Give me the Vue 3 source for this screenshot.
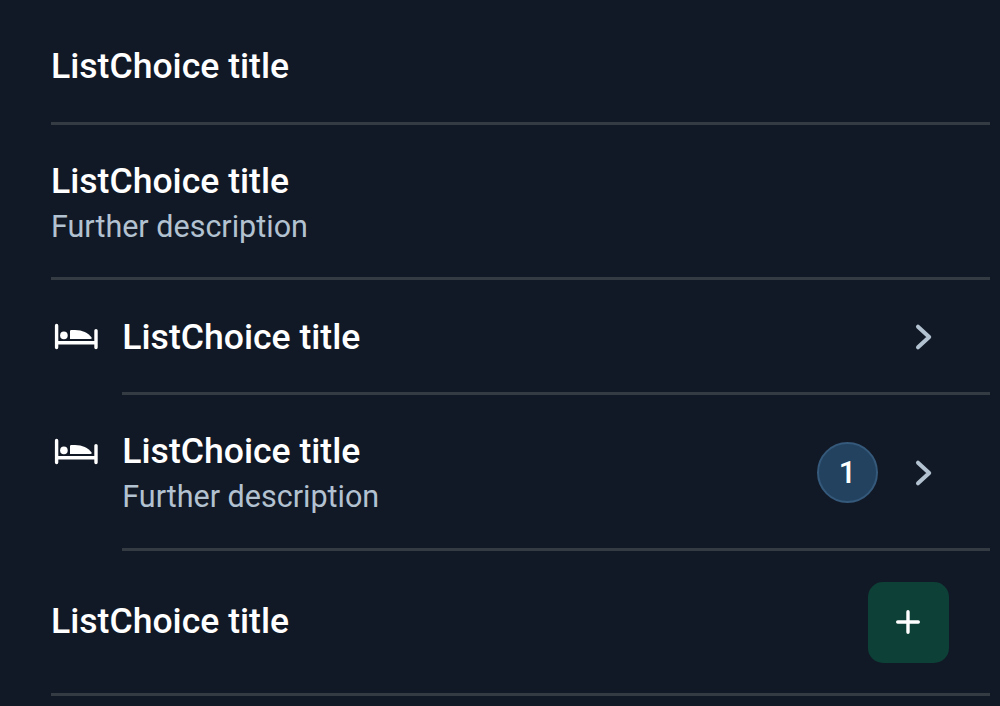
<script setup>
const rows = [
  {},
  { description: true },
  { icon: true, arrow: true },
  { icon: true, description: true, badge: 1, arrow: true },
  { add: true },
]
</script>

<template>
  <main class="list">
    <section v-for="(row, i) in rows" :key="i" class="row" :class="{ tall: row.description, action: row.add }">
      <div v-if="row.icon" class="lead">
        <svg class="bed" width="46" height="30" viewBox="0 0 46 30">
          <path d="M3.6 3.4V25.5M43 8.6V25.5M3.6 20.8H43" fill="none" stroke="currentColor" stroke-width="3.4" stroke-linecap="round" />
          <circle cx="10.9" cy="13.4" r="3.8" fill="currentColor" />
          <path d="M17 9.3Q17 8 18.4 8H22C29.5 8 35 11.1 38.4 15.2C39.2 16.3 38.6 16.9 37.4 16.9H17Z" fill="currentColor" />
        </svg>
      </div>
      <div class="body">
        <div class="copy">
          <div class="title">ListChoice title</div>
          <div v-if="row.description" class="description">Further description</div>
        </div>
        <div v-if="row.badge" class="badge">{{ row.badge }}</div>
        <svg v-if="row.arrow" class="arrow" width="20" height="28" viewBox="0 0 20 28">
          <path d="M4 3.7L15.2 14L4 24.3" fill="none" stroke="currentColor" stroke-width="4" stroke-linecap="round" stroke-linejoin="round" />
        </svg>
        <button v-if="row.add" class="add" aria-label="Add">
          <svg width="26" height="26" viewBox="0 0 26 26">
            <path d="M13 2.7V23.3M2.7 13H23.3" stroke="currentColor" stroke-width="3.4" stroke-linecap="round" />
          </svg>
        </button>
      </div>
    </section>
  </main>
</template>

<style>
body { background: #121926; }
</style>

<style scoped>
.list {
  box-sizing: border-box;
  height: 706px;
  padding: 10px 10px 0 51px;
  overflow: hidden;
  background: #121926;
  font-family: Roboto, sans-serif;
}
.row { display: flex; height: 115px; }
.tall { height: 155.4px; }
.action { height: 145px; }
.lead { flex: none; width: 71.3px; padding-top: 41.5px; color: #fff; }
.bed { display: block; margin-left: 2px; }
.body {
  box-sizing: border-box;
  flex: 1;
  display: flex;
  align-items: center;
  border-bottom: 3px solid #343b43;
}
.copy { flex: 1; }
.tall .body { padding-top: 2px; }
.row:nth-child(3) .body { padding-top: 1.2px; }
.action .body { padding-top: 1px; }
.action .copy { margin-bottom: 2px; }
.title {
  color: #fff;
  font-size: 35.6px;
  font-weight: 500;
  line-height: 46px;
  white-space: nowrap;
}
.description {
  color: #b3c2d1;
  font-size: 30.5px;
  line-height: 41px;
  padding-top: 2px;
  white-space: nowrap;
}
.badge {
  box-sizing: border-box;
  width: 61px;
  height: 61px;
  margin-right: 36px;
  border: 2px solid #35597a;
  border-radius: 50%;
  background: #224260;
  color: #fff;
  font-size: 30.5px;
  font-weight: 500;
  line-height: 57px;
  text-align: center;
}
.arrow { flex: none; margin-right: 56px; color: #b3c2d1; }
.add {
  display: flex;
  align-items: center;
  justify-content: center;
  width: 81.3px;
  height: 81.3px;
  margin-right: 41px;
  padding: 0;
  border: 0;
  border-radius: 15px;
  background: #0d4037;
  color: #fff;
}
</style>
